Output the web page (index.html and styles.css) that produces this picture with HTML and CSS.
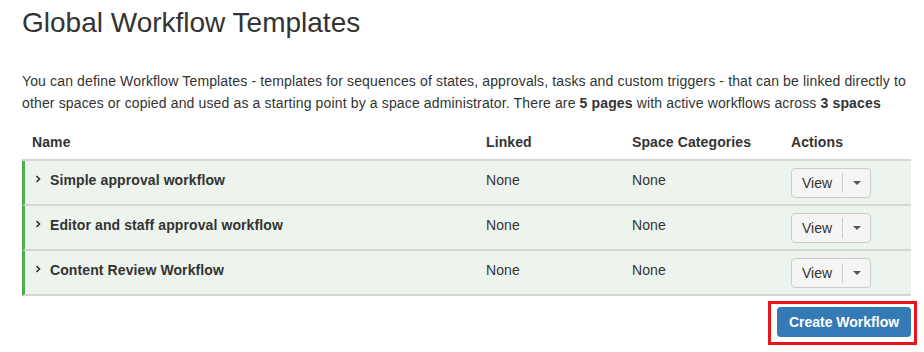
FILE: index.html
```html
<!DOCTYPE html>
<html lang="en">
<head>
  <meta charset="UTF-8">
  <title>Global Workflow Templates</title>
  <link rel="stylesheet" href="styles.css">
</head>
<body>
  <div class="page">
    <h1 class="page-title">Global Workflow Templates</h1>

    <p class="intro">
      You can define Workflow Templates - templates for sequences of states, approvals, tasks and custom triggers - that can be linked directly to
      other spaces or copied and used as a starting point by a space administrator. There are <b>5 pages</b> with active workflows across <b>3 spaces</b>
    </p>

    <div class="wf-table">
      <div class="wf-head">
        <div>Name</div>
        <div>Linked</div>
        <div>Space Categories</div>
        <div>Actions</div>
      </div>

      <div class="wf-row">
        <div class="wf-name">
          <svg class="chevron" width="6" height="8" viewBox="0 0 6 8"><polyline points="1.5,1 4.5,4 1.5,7" fill="none" stroke="#333" stroke-width="1.6"/></svg>
          Simple approval workflow
        </div>
        <div class="wf-text">None</div>
        <div class="wf-text">None</div>
        <div>
          <div class="split-btn"><span class="split-main">View</span><span class="split-caret"></span></div>
        </div>
      </div>

      <div class="wf-row">
        <div class="wf-name">
          <svg class="chevron" width="6" height="8" viewBox="0 0 6 8"><polyline points="1.5,1 4.5,4 1.5,7" fill="none" stroke="#333" stroke-width="1.6"/></svg>
          Editor and staff approval workflow
        </div>
        <div class="wf-text">None</div>
        <div class="wf-text">None</div>
        <div>
          <div class="split-btn"><span class="split-main">View</span><span class="split-caret"></span></div>
        </div>
      </div>

      <div class="wf-row">
        <div class="wf-name">
          <svg class="chevron" width="6" height="8" viewBox="0 0 6 8"><polyline points="1.5,1 4.5,4 1.5,7" fill="none" stroke="#333" stroke-width="1.6"/></svg>
          Content Review Workflow
        </div>
        <div class="wf-text">None</div>
        <div class="wf-text">None</div>
        <div>
          <div class="split-btn"><span class="split-main">View</span><span class="split-caret"></span></div>
        </div>
      </div>
    </div>

    <div class="footer-row">
      <div class="highlight">
        <button class="create-button">Create Workflow</button>
      </div>
    </div>
  </div>
</body>
</html>
```

FILE: styles.css
```css
* {
  margin: 0;
  padding: 0;
  box-sizing: border-box;
}

body {
  font-family: "Liberation Sans", Arial, sans-serif;
  font-size: 14px;
  color: #333;
  background: #fff;
}

.page {
  padding: 6px 13px 0 22px;
}

.page-title {
  font-size: 28px;
  font-weight: 400;
  line-height: 33px;
  color: #333;
}

.intro {
  margin-top: 31px;
  line-height: 22px;
  letter-spacing: 0.14px;
}

.intro b {
  font-weight: 700;
}

.wf-table {
  margin-top: 11px;
}

.wf-head,
.wf-row {
  display: grid;
  grid-template-columns: 454px 146px 159px 1fr;
  align-items: center;
  letter-spacing: 0.1px;
}

.wf-head > div,
.wf-row > div {
  padding-left: 10px;
}

.wf-head {
  height: 36px;
  font-weight: 700;
  border-bottom: 2px solid #d6d6d6;
}

.wf-row {
  grid-template-columns: 451px 146px 159px 1fr;
  height: 45px;
  background: #edf3ed;
  border-left: 3px solid #4cae4c;
  border-bottom: 2px solid #d6d6d6;
}

.wf-name,
.wf-text {
  padding-bottom: 5px;
}

.wf-name {
  font-weight: 700;
  display: flex;
  align-items: center;
}

.chevron {
  margin-right: 9px;
  margin-top: -2px;
}

.split-btn {
  display: inline-flex;
  align-items: center;
  height: 30px;
  width: 80px;
  background: #f5f5f5;
  border: 1px solid #ccc;
  border-radius: 4px;
  letter-spacing: 0;
}

.split-main {
  padding: 0 0 0 10px;
  width: 51px;
  border-right: 1px solid #ccc;
  line-height: 20px;
  margin-top: 1px;
}

.split-caret {
  margin-left: 10px;
  width: 0;
  height: 0;
  border-left: 4px solid transparent;
  border-right: 4px solid transparent;
  border-top: 4px solid #555;
}

.footer-row {
  display: flex;
  justify-content: flex-end;
  margin-right: -6px;
  margin-top: 5px;
}

.highlight {
  border: 3px solid #e8141c;
  padding: 3px 3px 5px 6px;
}

.create-button {
  display: block;
  width: 134px;
  height: 30px;
  background: #337ab7;
  color: #fff;
  border: none;
  border-radius: 4px;
  font-family: inherit;
  font-size: 14px;
  font-weight: 700;
}
```
